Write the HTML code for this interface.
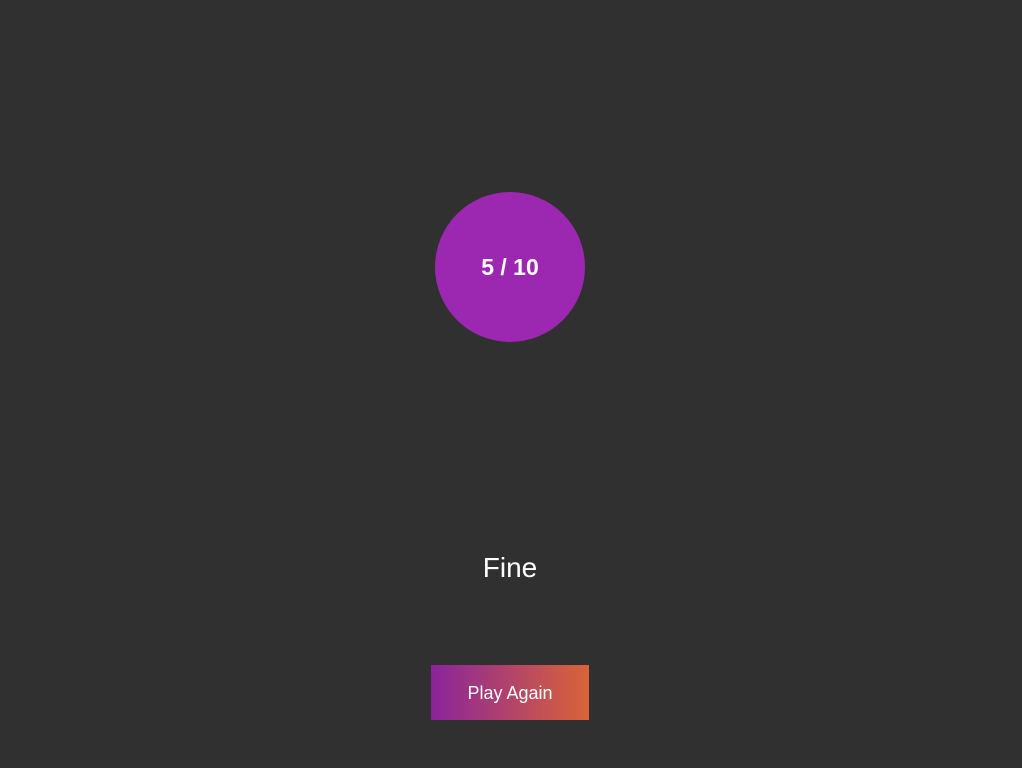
<!DOCTYPE html>
<html><head><style>
body{margin:0;width:1022px;height:768px;background:#303030;font-family:"Liberation Sans",sans-serif;position:relative;overflow:hidden}
.c{position:absolute;left:435px;top:192px;width:150px;height:150px;border-radius:50%;background:#9c27b0;color:#fff;font-weight:bold;font-size:23px;display:flex;align-items:center;justify-content:center}
.f{position:absolute;left:0;width:1020px;top:552px;text-align:center;color:#fff;font-size:28px}
.b{position:absolute;left:431px;top:665px;width:158px;height:55px;background:linear-gradient(90deg,#8a249c,#da6437);color:#fff;font-size:18px;display:flex;align-items:center;justify-content:center;padding-top:1px;box-sizing:border-box}
</style></head><body>
<div class="c">5 / 10</div>
<div class="f">Fine</div>
<div class="b">Play Again</div>
</body></html>
